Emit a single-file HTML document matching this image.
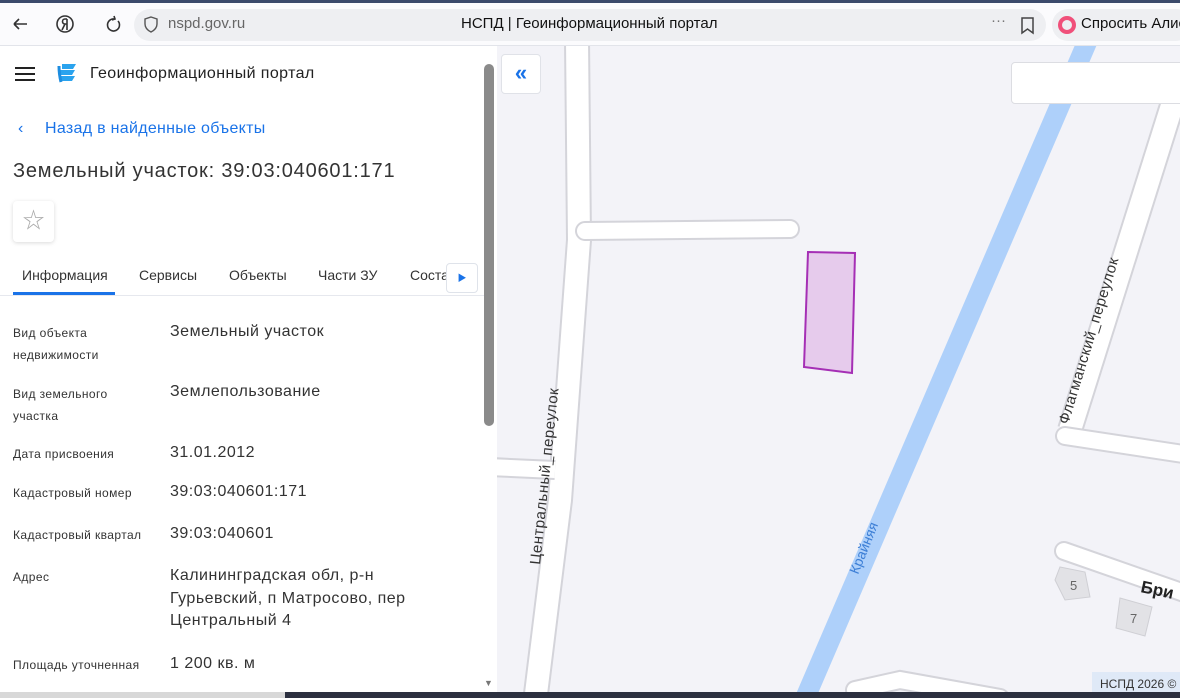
<!DOCTYPE html>
<html><head><meta charset="utf-8"><style>
*{margin:0;padding:0;box-sizing:border-box}
body{width:1180px;height:698px;overflow:hidden;font-family:"Liberation Sans","Noto Sans CJK SC",sans-serif;background:#f3f3f8;position:relative}
.top{position:absolute;left:0;top:0;width:1180px;height:46px;background:#fbfbfd;border-top:3px solid #3b4a6b;border-bottom:1px solid #e2e4ea}
.url{position:absolute;left:134px;top:6px;width:912px;height:32px;background:#eeeff2;border-radius:16px}
.panel{position:absolute;left:0;top:46px;width:497px;height:646px;background:#fff}
.lab{position:absolute;left:13px;font-size:12px;color:#333;line-height:22px;letter-spacing:0.4px}
.val{position:absolute;left:170px;font-size:16px;color:#333;line-height:22.5px;letter-spacing:0.5px}
.tab{position:absolute;top:267px;font-size:14px;color:#333}
</style></head><body>
<div class="top">
 <svg style="position:absolute;left:10px;top:10px" width="120" height="24" viewBox="0 0 120 24" fill="none" stroke="#333" stroke-width="1.6">
  <path d="M4 11h13M4 11l5-5M4 11l5 5"/>
  <circle cx="55" cy="11" r="8"/><path d="M57 6v11M57 6h-2a2.5 2.5 0 0 0 0 5h2M55 11l-3 6"/>
  <path d="M104 6a6 6 0 1 0 4 2M104 3l1 3-3 1"/>
 </svg>
 <div class="url"></div>
 <svg style="position:absolute;left:143px;top:13px" width="16" height="18" fill="none" stroke="#555" stroke-width="1.4"><path d="M8 1l6 2v5c0 4-3 6.5-6 8-3-1.5-6-4-6-8V3z"/></svg>
 <div style="position:absolute;left:168px;top:12px;font-size:15px;color:#666">nspd.gov.ru</div>
 <div style="position:absolute;left:461px;top:12px;font-size:15px;color:#111">НСПД | Геоинформационный портал</div>
 <div style="position:absolute;left:991px;top:9px;font-size:15px;color:#777">···</div>
 <svg style="position:absolute;left:1020px;top:14px" width="16" height="18" fill="none" stroke="#444" stroke-width="1.5"><path d="M2 1h11v15l-5.5-4-5.5 4z"/></svg>
 <div style="position:absolute;left:1052px;top:6px;width:140px;height:32px;background:#eeeff2;border-radius:16px"></div>
 <div style="position:absolute;left:1058px;top:13px;width:18px;height:18px;border-radius:50%;border:4px solid #f0507a"></div>
 <div style="position:absolute;left:1081px;top:12px;font-size:15px;color:#111;white-space:nowrap">Спросить Алис</div>
</div>

<svg style="position:absolute;left:497px;top:46px" width="683" height="652" viewBox="497 46 683 652">
 <g fill="none" stroke-linecap="round">
  <path d="M577 40 L579 240 L560 500 L534 710" stroke="#d4d4da" stroke-width="26"/>
  <path d="M577 40 L579 240 L560 500 L534 710" stroke="#fff" stroke-width="22"/>
  <path d="M585 231 L790 229" stroke="#d4d4da" stroke-width="20"/>
  <path d="M585 231 L790 229" stroke="#fff" stroke-width="16"/>
  <path d="M490 467 L555 470" stroke="#d4d4da" stroke-width="20" stroke-linecap="butt"/>
  <path d="M490 467 L555 470" stroke="#fff" stroke-width="16" stroke-linecap="butt"/>
  <path d="M1180 80 L1070 430" stroke="#d4d4da" stroke-width="26" stroke-linecap="butt"/>
  <path d="M1180 80 L1070 430" stroke="#fff" stroke-width="22" stroke-linecap="butt"/>
  <path d="M1065 436 L1190 455" stroke="#d4d4da" stroke-width="20"/>
  <path d="M1065 436 L1190 455" stroke="#fff" stroke-width="16"/>
  <path d="M1064 551 L1190 595" stroke="#d4d4da" stroke-width="20"/>
  <path d="M1064 551 L1190 595" stroke="#fff" stroke-width="16"/>
  <path d="M855 690 L900 680 L1000 698" stroke="#d4d4da" stroke-width="20"/>
  <path d="M855 690 L900 680 L1000 698" stroke="#fff" stroke-width="16"/>
  <path d="M1088 40 L800 710" stroke="#aed0fa" stroke-width="20" stroke-linecap="butt"/>
 </g>
 <polygon points="808,252 855,253 852,373 804,367" fill="#e6cbec" stroke="#a52fb5" stroke-width="2"/>
 <g fill="#e2e2e6" stroke="#cfcfd4"><polygon points="1060,567 1085,572 1090,597 1065,600 1055,580"/><polygon points="1120,598 1152,607 1145,636 1116,628"/></g>
 <text x="1070" y="590" font-size="13" fill="#666" font-family="Liberation Sans">5</text>
 <text x="1130" y="623" font-size="13" fill="#666" font-family="Liberation Sans">7</text>
 <text transform="translate(540,565) rotate(-84)" font-size="15" fill="#333" font-family="Liberation Sans" letter-spacing="0.5">Центральный_переулок</text>
 <text transform="translate(1068,425) rotate(-73)" font-size="15" fill="#333" font-family="Liberation Sans" letter-spacing="0.5">Флагманский_переулок</text>
 <text transform="translate(858,575) rotate(-68)" font-size="14" fill="#3d7fd6" font-family="Liberation Sans">Крайняя</text>
 <text transform="translate(1140,592) rotate(12)" font-size="17" font-weight="bold" fill="#222" font-family="Liberation Sans">Бри</text>
 <rect x="1092" y="672" width="90" height="20" fill="#dfe9f7"/>
 <text x="1100" y="688" font-size="12" fill="#333" font-family="Liberation Sans">НСПД 2026 ©</text>
</svg>
<div style="position:absolute;left:1011px;top:62px;width:180px;height:42px;background:#fff;border:1px solid #dcdde2;border-radius:4px"></div>
<div style="position:absolute;left:501px;top:54px;width:40px;height:40px;background:#fff;border:1px solid #e0e2e8;border-radius:4px;color:#1a73e8;font-size:22px;font-weight:bold;text-align:center;line-height:36px">«</div>

<div class="panel">
 <svg style="position:absolute;left:15px;top:21px" width="20" height="14"><path d="M0 1h20M0 7h20M0 13h20" stroke="#222" stroke-width="2"/></svg>
 <svg style="position:absolute;left:57px;top:16px" width="22" height="24"><path d="M5 2h14l-3 5H5zM3 8h15l-3 5H3zM3 14h15l-3 5H5z" fill="#2aa3ee"/><path d="M2 4q0 8 2 16" stroke="#1d8de0" stroke-width="3" fill="none"/></svg>
 <div style="position:absolute;left:90px;top:19px;font-size:16px;color:#222;letter-spacing:0.4px">Геоинформационный портал</div>
 <div style="position:absolute;left:18px;top:74px;font-size:16px;color:#1a73e8;letter-spacing:0.3px"><span style="display:inline-block;width:27px">‹</span>Назад в найденные объекты</div>
 <div style="position:absolute;left:13px;top:114px;font-size:20px;color:#333;letter-spacing:0.8px">Земельный участок: 39:03:040601:171</div>
 <div style="position:absolute;left:13px;top:155px;width:41px;height:41px;background:#fff;border-radius:4px;box-shadow:0 1px 4px rgba(0,0,0,.15);color:#aaa;font-size:22px;text-align:center;line-height:40px">☆</div>
 <div style="position:absolute;left:0;top:249px;width:484px;height:1px;background:#e6e8ee"></div>
 <div style="position:absolute;left:13px;top:246px;width:102px;height:3px;background:#1a73e8"></div>
 <div style="position:absolute;left:446px;top:217px;width:32px;height:30px;background:#fff;border:1px solid #dfe3ea;border-radius:4px;color:#1a73e8;font-size:9px;text-align:center;line-height:29px">▶</div>
 <div style="position:absolute;left:484px;top:18px;width:10px;height:362px;background:#8a8a8a;border-radius:5px"></div>
</div>
<div class="tab" style="left:22px">Информация</div>
<div class="tab" style="left:139px">Сервисы</div>
<div class="tab" style="left:229px">Объекты</div>
<div class="tab" style="left:318px">Части ЗУ</div>
<div class="tab" style="left:410px;width:36px;overflow:hidden">Состав</div>
<div class="lab" style="top:322px">Вид объекта<br>недвижимости</div>
<div class="val" style="top:321px">Земельный участок</div>
<div class="lab" style="top:383px">Вид земельного<br>участка</div>
<div class="val" style="top:381px">Землепользование</div>
<div class="lab" style="top:443px">Дата присвоения</div>
<div class="val" style="top:442px">31.01.2012</div>
<div class="lab" style="top:482px">Кадастровый номер</div>
<div class="val" style="top:481px">39:03:040601:171</div>
<div class="lab" style="top:524px">Кадастровый квартал</div>
<div class="val" style="top:523px">39:03:040601</div>
<div class="lab" style="top:566px">Адрес</div>
<div class="val" style="top:565px">Калининградская обл, р-н<br>Гурьевский, п Матросово, пер<br>Центральный 4</div>
<div class="lab" style="top:654px">Площадь уточненная</div>
<div class="val" style="top:653px">1 200 кв. м</div>
<div style="position:absolute;left:484px;top:678px;font-size:9px;color:#777">▼</div>
<div style="position:absolute;left:0;top:692px;width:285px;height:6px;background:#d8d8d8"></div>
<div style="position:absolute;left:285px;top:692px;width:895px;height:6px;background:#2c3040"></div>
</body></html>
